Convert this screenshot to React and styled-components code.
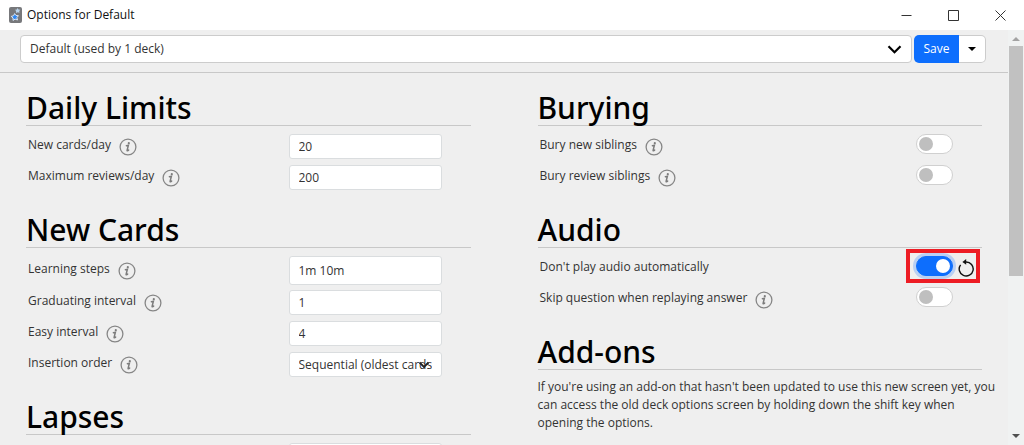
import { useId, useState } from "react";
import styled, { createGlobalStyle } from "styled-components";

const App = () => {
  return (
    <Window>
      <GlobalStyle />
      <TitleBar>
        <AppIcon />
        <Title>Options for Default</Title>
        <WindowButton aria-label="Minimize">
          <svg width="11" height="11" viewBox="0 0 11 11">
            <path d="M0.5 5.5h10" />
          </svg>
        </WindowButton>
        <WindowButton aria-label="Maximize">
          <svg width="11" height="11" viewBox="0 0 11 11">
            <path d="M0.5 0.5h10v10h-10z" />
          </svg>
        </WindowButton>
        <WindowButton aria-label="Close">
          <svg width="11" height="11" viewBox="0 0 11 11">
            <path d="M0.5 0.5l10 10M10.5 0.5l-10 10" />
          </svg>
        </WindowButton>
      </TitleBar>
      <Body>
        <Page>
          <Header>
            <PresetWrap>
              <PresetSelect aria-label="Preset">
                <option>Default (used by 1 deck)</option>
              </PresetSelect>
              <PresetChevron width="15" height="9" viewBox="0 0 15 9">
                <path d="M1.5 1.2l6 6 6-6" />
              </PresetChevron>
            </PresetWrap>
            <SaveGroup>
              <SaveButton>Save</SaveButton>
              <CaretButton aria-label="More actions">
                <svg width="8" height="4" viewBox="0 0 8 4">
                  <path d="M0 0h8l-4 4z" />
                </svg>
              </CaretButton>
            </SaveGroup>
          </Header>
          <Columns>
            <Column>
              <Section title="Daily Limits">
                <TextRow label="New cards/day" value="20" />
                <TextRow label="Maximum reviews/day" value="200" />
              </Section>
              <Section title="New Cards">
                <TextRow label="Learning steps" value="1m 10m" tall />
                <TextRow label="Graduating interval" value="1" />
                <TextRow label="Easy interval" value="4" />
                <SelectRow label="Insertion order" value="Sequential (oldest cards first)" />
              </Section>
              <Section title="Lapses">
                <Row>
                  <TextInput type="text" aria-label="Relearning steps" $tall />
                </Row>
              </Section>
            </Column>
            <Column>
              <Section title="Burying">
                <SwitchRow label="Bury new siblings" />
                <SwitchRow label="Bury review siblings" />
              </Section>
              <Section title="Audio">
                <SwitchRow label="Don't play audio automatically" info={false} on marked />
                <SwitchRow label="Skip question when replaying answer" />
              </Section>
              <Section title="Add-ons">
                <Note>
                  If you're using an add-on that hasn't been updated to use this new screen yet, you
                  can access the old deck options screen by holding down the shift key when opening
                  the options.
                </Note>
              </Section>
            </Column>
          </Columns>
        </Page>
        <Scrollbar>
          <svg width="8" height="4" viewBox="0 0 8 4">
            <path d="M0 4h8l-4-4z" fill="#a3a3a3" />
          </svg>
          <Track>
            <Thumb />
          </Track>
          <svg width="8" height="4" viewBox="0 0 8 4">
            <path d="M0 0h8l-4 4z" fill="#505050" />
          </svg>
        </Scrollbar>
      </Body>
    </Window>
  );
};

const Section = ({ title, children }) => (
  <SectionBox>
    <Heading>{title}</Heading>
    {children}
  </SectionBox>
);

const RowLabel = ({ id, label, info = true, tall }) => (
  <LabelCell $tall={tall}>
    <Label htmlFor={id}>{label}</Label>
    {info && (
      <InfoButton aria-label={`About ${label}`}>
        <svg width="18" height="18" viewBox="0 0 18 18">
          <circle cx="9" cy="9" r="7.9" fill="none" stroke="#868686" strokeWidth="1.3" />
          <circle cx="9.8" cy="5.2" r="1.1" fill="#7c7c7c" />
          <path
            d="M7.4 7.7l2-.4-1.3 5c-.1.7.6.6 1.5-.2"
            fill="none"
            stroke="#7c7c7c"
            strokeWidth="1.5"
            strokeLinecap="round"
          />
        </svg>
      </InfoButton>
    )}
  </LabelCell>
);

const TextRow = ({ label, value, tall }) => {
  const id = useId();
  return (
    <Row>
      <RowLabel id={id} label={label} tall={tall} />
      <TextInput id={id} type="text" defaultValue={value} $tall={tall} />
    </Row>
  );
};

const SelectRow = ({ label, value }) => {
  const id = useId();
  return (
    <Row>
      <RowLabel id={id} label={label} />
      <SelectWrap>
        <Select id={id}>
          <option>{value}</option>
        </Select>
        <RowChevron width="12" height="8" viewBox="0 0 12 8">
          <path d="M1.5 1.5l4.5 4.5 4.5-4.5" />
        </RowChevron>
      </SelectWrap>
    </Row>
  );
};

const SwitchRow = ({ label, info, on = false, marked = false }) => {
  const id = useId();
  const [checked, setChecked] = useState(on);
  return (
    <Row>
      <RowLabel id={id} label={label} info={info} />
      <SwitchCell $marked={marked}>
        <Switch
          id={id}
          type="checkbox"
          checked={checked}
          onChange={() => setChecked(!checked)}
          $focused={marked}
        />
        {checked && (
          <RevertButton aria-label="Restore default" onClick={() => setChecked(false)}>
            <svg width="16" height="18" viewBox="0 0 16 18">
              <path d="M2.6 5.8A7 7 0 1 0 8 3" fill="none" stroke="#111" strokeWidth="1.4" />
              <path d="M8.2 0v5.8L4.4 2.9z" fill="#111" />
            </svg>
          </RevertButton>
        )}
      </SwitchCell>
    </Row>
  );
};

const AppIcon = () => (
  <svg width="13" height="16" viewBox="0 0 13 16">
    <rect x="0" y="0" width="13" height="16" rx="2" fill="#77787b" />
    <path d="M8.6 1l.9 1.5 1.9.2-1.2 1.4.3 1.7-1.9-.6-1.6.7.1-1.8L6 2.8l1.8-.4z" fill="#b9d3ea" />
    <path
      d="M5.6 6.6l1.4 1.9 2.4.2-1.5 1.9.6 2.4-2.4-.9-2.1 1.3.1-2.4-1.9-1.6 2.4-.7z"
      fill="#2f86f0"
      stroke="#dbe7f4"
      strokeWidth="1"
    />
  </svg>
);

const GlobalStyle = createGlobalStyle`
  *, *::before, *::after {
    box-sizing: border-box;
  }

  body {
    margin: 0;
    font-family: "Open Sans", "Noto Sans", sans-serif;
    font-size: 12px;
    line-height: 18px;
    color: #333;
    background-color: #efefef;
  }

  button, input, select {
    margin: 0;
    font: inherit;
    color: inherit;
  }
`;

const Window = styled.div`
  display: flex;
  flex-direction: column;
  height: 100vh;
  overflow: hidden;
`;

const TitleBar = styled.header`
  display: flex;
  align-items: center;
  flex: none;
  height: 30px;
  padding-left: 9px;
  background-color: #fff;
`;

const Title = styled.span`
  flex: 1;
  margin-left: 5px;
  color: #111;
`;

const WindowButton = styled.button`
  display: flex;
  align-items: center;
  justify-content: center;
  width: 47px;
  height: 30px;
  padding: 0;
  border: 0;
  background: none;

  path {
    fill: none;
    stroke: #333;
  }
`;

const Body = styled.div`
  display: flex;
  flex: 1;
  min-height: 0;
`;

const Page = styled.main`
  flex: 1;
  min-width: 0;
  overflow: hidden;
`;

const Header = styled.div`
  display: flex;
  gap: 2px;
  height: 43px;
  padding: 5px 22px 9px 20px;
  border-bottom: 1px solid #c8c8c8;
`;

const PresetWrap = styled.div`
  position: relative;
  flex: 1;
`;

const PresetSelect = styled.select`
  appearance: none;
  width: 100%;
  height: 28px;
  padding: 0 9px;
  border: 1px solid #ccc;
  border-radius: 4px;
  background-color: #fff;
`;

const PresetChevron = styled.svg`
  position: absolute;
  top: 10px;
  right: 10px;
  pointer-events: none;
  fill: none;
  stroke: #000;
  stroke-width: 2.2;
`;

const SaveGroup = styled.div`
  display: flex;
  height: 28px;
`;

const SaveButton = styled.button`
  width: 45px;
  padding: 0;
  border: 0;
  border-radius: 5px 0 0 5px;
  background-color: #0d6efd;
  color: #fff;
`;

const CaretButton = styled.button`
  display: flex;
  align-items: center;
  justify-content: center;
  width: 27px;
  padding: 0;
  border: 1px solid #ccc;
  border-left: 0;
  border-radius: 0 5px 5px 0;
  background-color: #fff;
`;

const Columns = styled.div`
  display: grid;
  grid-template-columns: 1fr 1fr;
  gap: 67px;
  padding: 9px 26px;
`;

const Column = styled.div`
  min-width: 0;
`;

const SectionBox = styled.section`
  display: flex;
  flex-direction: column;
  gap: 5px;
  margin-bottom: 13px;
`;

const Heading = styled.h1`
  margin: 0 0 3px;
  padding-top: 8px;
  border-bottom: 1px solid #c8c8c8;
  font-family: "Noto Sans", "Open Sans", sans-serif;
  font-size: 30px;
  line-height: 35px;
  font-weight: 500;
  color: #000;
`;

const Row = styled.div`
  display: flex;
  align-items: flex-start;
  justify-content: flex-end;
  min-height: 26px;
  padding: 0 29px 0 2px;
`;

const LabelCell = styled.div`
  display: flex;
  flex: 1;
  gap: 8px;
  padding-top: ${(props) => (props.$tall ? "4px" : "2px")};
`;

const Label = styled.label`
  white-space: nowrap;
`;

const InfoButton = styled.button`
  width: 18px;
  height: 18px;
  margin-top: 2px;
  padding: 0;
  border: 0;
  background: none;

  svg {
    display: block;
  }
`;

const TextInput = styled.input`
  width: 153px;
  height: ${(props) => (props.$tall ? "29px" : "25px")};
  padding: 0 9px;
  border: 1px solid #dadddf;
  border-radius: 3px;
  background-color: #fff;
`;

const SelectWrap = styled.div`
  position: relative;
  width: 153px;
`;

const Select = styled.select`
  display: block;
  appearance: none;
  width: 100%;
  height: 25px;
  padding: 0 9px;
  border: 1px solid #dadddf;
  border-radius: 3px;
  background-color: #fff;
`;

const RowChevron = styled.svg`
  position: absolute;
  top: 9px;
  right: 12px;
  pointer-events: none;
  fill: none;
  stroke: #222;
  stroke-width: 1.8;
`;

const SwitchCell = styled.div`
  position: relative;
  display: flex;

  &::after {
    content: "";
    display: ${(props) => (props.$marked ? "block" : "none")};
    position: absolute;
    top: -7px;
    left: -10px;
    width: 74px;
    height: 34px;
    border: 4px solid #ed1c24;
    pointer-events: none;
  }
`;

const Switch = styled.input`
  appearance: none;
  display: flex;
  align-items: center;
  justify-content: ${(props) => (props.checked ? "flex-end" : "flex-start")};
  width: 37px;
  height: 20px;
  padding: 0 2px;
  border: 1px solid ${(props) => (props.checked ? "#0d6efd" : "#d0d0d0")};
  border-radius: 10px;
  background-color: ${(props) => (props.checked ? "#0d6efd" : "#fff")};
  box-shadow: ${(props) => (props.$focused ? "0 0 0 3px #b9d0f3" : "none")};

  &::before {
    content: "";
    width: 14px;
    height: 14px;
    border-radius: 50%;
    background-color: ${(props) => (props.checked ? "#fff" : "#bfbfbf")};
  }
`;

const RevertButton = styled.button`
  position: absolute;
  top: 3px;
  left: 42px;
  padding: 0;
  border: 0;
  background: none;

  svg {
    display: block;
  }
`;

/* the note runs a little past the column, into the page's right padding */
const Note = styled.p`
  margin: 0 -18px 0 0;
`;

const Scrollbar = styled.div`
  display: flex;
  flex-direction: column;
  align-items: center;
  width: 16px;
  padding: 7px 0;
  background-color: #f0f2f2;
`;

const Track = styled.div`
  flex: 1;
  width: 14px;
  margin: 5px 0;
`;

const Thumb = styled.div`
  height: 60%;
  background-color: #c1c1c1;
`;

export default App;
